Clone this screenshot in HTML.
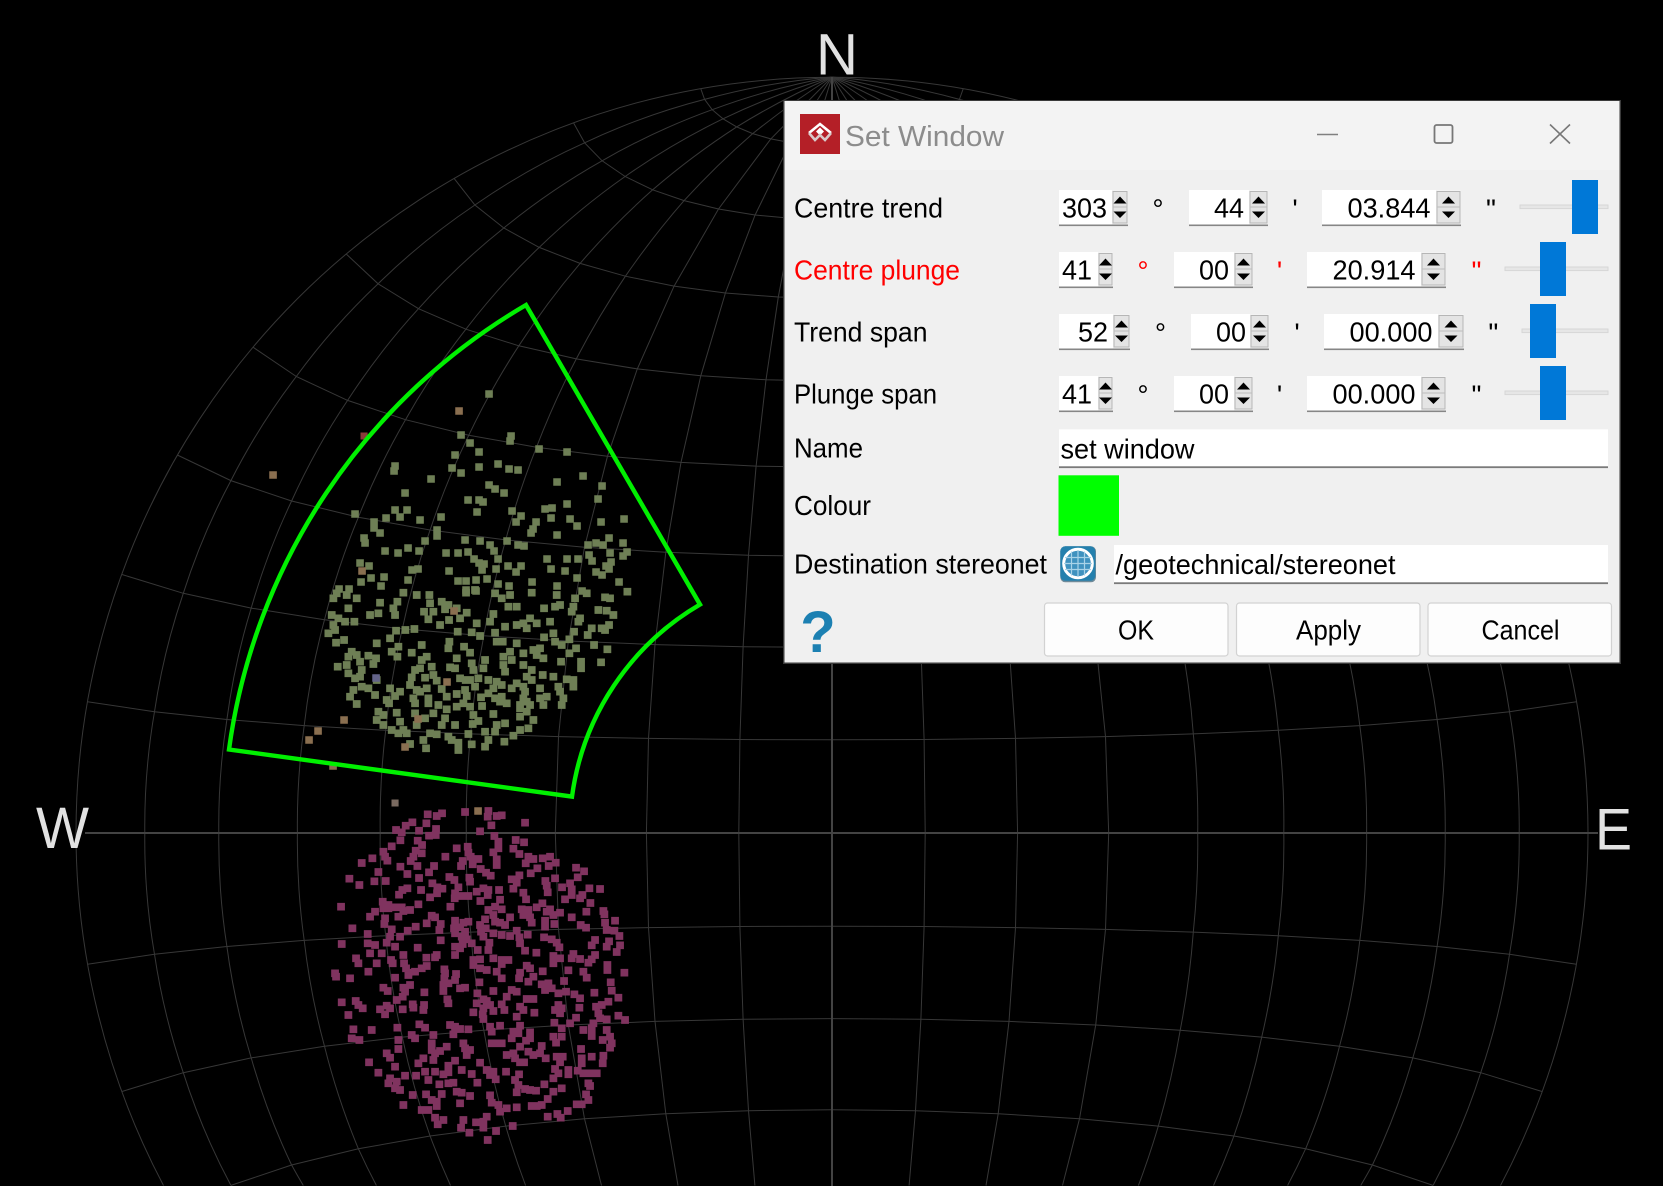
<!DOCTYPE html>
<html lang="en">
<head>
<meta charset="utf-8">
<title>Set Window</title>
<style>
html,body{margin:0;padding:0;background:#000;width:1663px;height:1186px;overflow:hidden}
svg{display:block;position:absolute;left:0;top:0}
text{font-family:"Liberation Sans",Arial,sans-serif;font-size:28px;fill:#000}
.r{fill:#ff0000}
.nsew{font-size:58px;fill:#e2e2e2}
.title{fill:#8c8c8c;font-size:29px}
.pt{fill:none;stroke-linecap:square}
</style>
</head>
<body>
<svg xmlns="http://www.w3.org/2000/svg" width="1663" height="1186" viewBox="0 0 1663 1186">
<defs>
<g id="q" fill="none" stroke="#373737" stroke-width="1">
<path d="M93.2 0L92.1 93.5 88.9 186.3 83.5 277.7 75.9 366.9 66 453.2 53.7 536 38.8 614.5 21.1 688 0 756"/>
<path d="M185.6 0L183.5 94.6 177 188.4 166.2 280.7 151 370.6 131.2 457.2 106.6 540 76.9 618 41.6 690.4 0 756"/>
<path d="M276.7 0L273.5 96.4 263.7 192 247.5 285.8 224.5 376.8 194.7 464.1 157.9 546.9 113.5 624 61.2 694.1 0 756"/>
<path d="M365.7 0A841 841 0 0 1 361.3 99.1 841 841 0 0 1 348.2 197.2 841 841 0 0 1 326.3 293.1 841 841 0 0 1 295.5 385.8 841 841 0 0 1 255.7 474.1 841 841 0 0 1 206.6 556.8 841 841 0 0 1 147.9 632.4 841 841 0 0 1 79.3 699.4 841 841 0 0 1 0 756"/>
<path d="M451.8 0A757 757 0 0 1 446.3 102.7 757 757 0 0 1 429.7 204.1 757 757 0 0 1 401.9 303 757 757 0 0 1 363.2 397.8 757 757 0 0 1 313.2 487.2 757 757 0 0 1 251.9 569.6 757 757 0 0 1 179.3 643.2 757 757 0 0 1 95.3 706.1 757 757 0 0 1 0 756"/>
<path d="M534.6 0A712 712 0 0 1 527.8 107.4 712 712 0 0 1 507.5 213.3 712 712 0 0 1 473.6 315.8 712 712 0 0 1 426.5 413.3 712 712 0 0 1 366.1 503.8 712 712 0 0 1 292.8 585.6 712 712 0 0 1 206.9 656.5 712 712 0 0 1 109 714.2 712 712 0 0 1 0 756"/>
<path d="M613.2 0A687 687 0 0 1 605.1 113.5 687 687 0 0 1 580.8 224.9 687 687 0 0 1 540.4 332 687 687 0 0 1 484.4 432.6 687 687 0 0 1 413.5 524.3 687 687 0 0 1 328.2 605 687 687 0 0 1 229.9 672.2 687 687 0 0 1 119.8 723.3 687 687 0 0 1 0 756"/>
<path d="M687.2 0A672 672 0 0 1 677.5 121.3 672 672 0 0 1 648.7 239.7 672 672 0 0 1 601.1 352.4 672 672 0 0 1 535.7 456.5 672 672 0 0 1 453.9 549.2 672 672 0 0 1 357.1 628 672 672 0 0 1 247.4 690.2 672 672 0 0 1 127.4 733.6 672 672 0 0 1 0 756"/>
<path d="M0 93.2L92.1 93.5 183.5 94.6 273.5 96.4 361.3 99.1 446.3 102.7 527.8 107.4 605.1 113.5 677.5 121.3 744.5 131.3"/>
<path d="M0 185.6L88.9 186.3 177 188.4 263.7 192 348.2 197.2 429.7 204.1 507.5 213.3 580.8 224.9 648.7 239.7 710.4 258.6"/>
<path d="M0 276.7L83.5 277.7 166.2 280.7 247.5 285.8 326.3 293.1 401.9 303 473.6 315.8 540.4 332 601.1 352.4 654.7 378"/>
<path d="M0 365.7L75.9 366.9 151 370.6 224.5 376.8 295.5 385.8 363.2 397.8 426.5 413.3 484.4 432.6 535.7 456.5 579.1 485.9"/>
<path d="M0 451.8L66 453.2 131.2 457.2 194.7 464.1 255.7 474.1 313.2 487.2 366.1 503.8 413.5 524.3 453.9 549.2 485.9 579.1"/>
<path d="M0 534.6L53.7 536 106.6 540 157.9 546.9 206.6 556.8 251.9 569.6 292.8 585.6 328.2 605 357.1 628 378 654.7"/>
<path d="M0 613.2L38.8 614.5 76.9 618 113.5 624 147.9 632.4 179.3 643.2 206.9 656.5 229.9 672.2 247.4 690.2 258.6 710.4"/>
<path d="M0 687.2L21.1 688 41.6 690.4 61.2 694.1 79.3 699.4 95.3 706.1 109 714.2 119.8 723.3 127.4 733.6 131.3 744.5"/>
</g>
<g id="qb" fill="none" stroke="#373737" stroke-width="1">
<path d="M93.2 0L92.1 93.5 88.9 186.3 83.5 277.7 77.1 352.5"/>
<path d="M185.6 0L183.5 94.6 177 188.4 166.2 280.7 154 352.5"/>
<path d="M276.7 0L273.5 96.4 263.7 192 247.5 285.8 230.5 352.5"/>
<path d="M365.7 0A841 841 0 0 1 361.3 99.1 841 841 0 0 1 348.2 197.2 841 841 0 0 1 326.3 293.1 841 841 0 0 1 306.4 352.5"/>
<path d="M451.8 0A757 757 0 0 1 446.3 102.7 757 757 0 0 1 429.7 204.1 757 757 0 0 1 401.9 303 757 757 0 0 1 381.5 352.5"/>
<path d="M534.6 0A712 712 0 0 1 527.8 107.4 712 712 0 0 1 507.5 213.3 712 712 0 0 1 473.6 315.8 712 712 0 0 1 455.6 352.5"/>
<path d="M613.2 0A687 687 0 0 1 605.1 113.5 687 687 0 0 1 580.8 224.9 687 687 0 0 1 540.4 332 687 687 0 0 1 528.7 352.5"/>
<path d="M687.2 0A672 672 0 0 1 677.5 121.3 672 672 0 0 1 648.7 239.7 672 672 0 0 1 601.1 352.4"/>
<path d="M0 93.2L92.1 93.5 183.5 94.6 273.5 96.4 361.3 99.1 446.3 102.7 527.8 107.4 605.1 113.5 677.5 121.3 744.5 131.3"/>
<path d="M0 185.6L88.9 186.3 177 188.4 263.7 192 348.2 197.2 429.7 204.1 507.5 213.3 580.8 224.9 648.7 239.7 710.4 258.6"/>
<path d="M0 276.7L83.5 277.7 166.2 280.7 247.5 285.8 326.3 293.1 401.9 303 473.6 315.8 540.4 332 601.1 352.4"/>
</g>
<g id="ar"><path d="M-6.5 13.5L0 6.5L6.5 13.5ZM-6.5 21.5L0 28L6.5 21.5Z" fill="#000"/></g>
<g id="row24">
<rect x="1059" width="54" height="35" fill="#f3f3f3"/><rect x="1059" width="39" height="34.5" fill="#fff"/><rect x="1059" y="34.5" width="54" height="1.6" fill="#868686"/>
<rect x="1099" y="1.5" width="13" height="31.5" fill="#e4e4e4" stroke="#b6b6b6"/><path d="M1099 17h13" stroke="#bdbdbd"/><use href="#ar" x="1105.5"/>
<rect x="1174" width="79" height="35" fill="#f3f3f3"/><rect x="1174" width="60" height="34.5" fill="#fff"/><rect x="1174" y="34.5" width="79" height="1.6" fill="#868686"/>
<rect x="1235" y="1.5" width="17" height="31.5" fill="#e4e4e4" stroke="#b6b6b6"/><path d="M1235 17h17" stroke="#bdbdbd"/><use href="#ar" x="1243.5"/>
<rect x="1307" width="139" height="35" fill="#f3f3f3"/><rect x="1307" width="114" height="34.5" fill="#fff"/><rect x="1307" y="34.5" width="139" height="1.6" fill="#868686"/>
<rect x="1422" y="1.5" width="23" height="31.5" fill="#e4e4e4" stroke="#b6b6b6"/><path d="M1422 17h23" stroke="#bdbdbd"/><use href="#ar" x="1433.5"/>
</g>
</defs>

<rect width="1663" height="1186" fill="#000"/>
<use href="#q" transform="translate(832 833) scale(1 -1)"/>
<use href="#q" transform="translate(832 833) scale(-1 -1)"/>
<use href="#qb" transform="translate(832 833)"/>
<use href="#qb" transform="translate(832 833) scale(-1 1)"/>
<path d="M76 833A756 756 0 0 1 1588 833A756 756 0 0 1 1500.5 1185.5M76 833A756 756 0 0 0 163.5 1185.5" fill="none" stroke="#373737" stroke-width="1"/>
<path d="M85 833H1598M832 77V1186" fill="none" stroke="#434343" stroke-width="2"/>

<path class="pt" transform="translate(320 800) scale(.33333)" stroke="#80335f" stroke-width="23" d="M323 43h.3M350 48h.3M366 40h.3M435 36h.3M505 33h.3M503 50h.3M530 48h.3M545 46h.3M615 68h.3M277 67h.3M257 77h.3M319 70h.3M228 90h.3M245 97h.3M297 92h.3M348 87h.3M347 105h.3M327 107h.3M514 76h.3M480 94h.3M241 121h.3M293 122h.3M306 135h.3M215 139h.3M523 108h.3M535 125h.3M535 145h.3M587 120h.3M612 127h.3M580 146h.3M598 162h.3M443 140h.3M410 145h.3M445 158h.3M452 170h.3M520 157h.3M530 178h.3M530 195h.3M190 155h.3M195 170h.3M202 182h.3M157 175h.3M125 189h.3M287 152h.3M305 160h.3M280 170h.3M272 183h.3M292 198h.3M376 170h.3M475 177h.3M428 183h.3M423 198h.3M458 193h.3M625 170h.3M640 177h.3M617 190h.3M668 175h.3M690 170h.3M707 188h.3M686 198h.3M241 200h.3M342 198h.3M327 217h.3M262 222h.3M175 216h.3M482 207h.3M498 218h.3M512 227h.3M652 205h.3M632 220h.3M598 226h.3M768 203h.3M792 214h.3M773 232h.3M88 236h.3M118 255h.3M163 244h.3M197 243h.3M297 234h.3M388 231h.3M403 240h.3M448 233h.3M450 245h.3M575 238h.3M590 248h.3M676 243h.3M680 257h.3M705 235h.3M750 250h.3M755 268h.3M337 250h.3M352 262h.3M367 266h.3M262 265h.3M247 270h.3M237 284h.3M303 270h.3M415 262h.3M405 280h.3M425 288h.3M445 288h.3M404 295h.3M470 275h.3M490 265h.3M505 270h.3M503 285h.3M537 270h.3M580 266h.3M610 278h.3M618 298h.3M726 262h.3M808 265h.3M840 267h.3M683 277h.3M755 285h.3M735 298h.3M787 285h.3M780 295h.3M351 280h.3M330 292h.3M481 303h.3M540 299h.3M188 305h.3M205 315h.3M63 320h.3M295 313h.3M391 320h.3M811 309h.3M667 310h.3M650 322h.3M205 325h.3M225 322h.3M245 322h.3M250 333h.3M270 330h.3M165 335h.3M150 350h.3M190 325h.3M235 350h.3M525 320h.3M505 330h.3M545 328h.3M520 345h.3M525 365h.3M605 328h.3M625 330h.3M610 345h.3M630 352h.3M690 328h.3M680 335h.3M720 338h.3M700 345h.3M850 333h.3M853 343h.3M799 335h.3M335 347h.3M345 352h.3M320 370h.3M195 355h.3M193 372h.3M570 352h.3M405 362h.3M445 365h.3M430 368h.3M495 358h.3M540 368h.3M555 375h.3M635 368h.3M755 352h.3M675 362h.3M703 372h.3M675 380h.3M97 385h.3M362 372h.3M358 390h.3M287 380h.3M263 392h.3M215 388h.3M402 385h.3M420 382h.3M435 395h.3M480 375h.3M497 385h.3M483 395h.3M590 392h.3M782 375h.3M798 383h.3M855 368h.3M885 362h.3M860 390h.3M883 392h.3M143 402h.3M210 410h.3M240 410h.3M405 400h.3M425 410h.3M440 418h.3M490 410h.3M520 400h.3M545 405h.3M570 408h.3M598 412h.3M623 404h.3M672 412h.3M695 418h.3M898 408h.3M825 420h.3M65 432h.3M143 430h.3M165 435h.3M200 428h.3M225 440h.3M362 421h.3M428 432h.3M455 430h.3M508 428h.3M600 430h.3M710 428h.3M718 442h.3M815 436h.3M867 424h.3M860 440h.3M900 436h.3M293 443h.3M405 440h.3M420 445h.3M473 450h.3M505 450h.3M615 452h.3M649 458h.3M890 456h.3M150 460h.3M185 460h.3M250 465h.3M405 465h.3M350 465h.3M319 473h.3M345 472h.3M700 468h.3M720 475h.3M760 462h.3M755 475h.3M780 477h.3M825 465h.3M815 478h.3M108 475h.3M213 480h.3M115 490h.3M170 490h.3M218 490h.3M252 490h.3M460 480h.3M480 478h.3M520 475h.3M545 480h.3M565 480h.3M460 495h.3M545 492h.3M805 488h.3M700 490h.3M258 505h.3M320 498h.3M305 505h.3M373 508h.3M480 505h.3M500 510h.3M530 515h.3M620 497h.3M630 505h.3M600 518h.3M668 514h.3M745 511h.3M862 495h.3M862 510h.3M790 515h.3M145 515h.3M265 518h.3M285 515h.3M45 520h.3M408 522h.3M913 518h.3M375 520h.3"/>

<path class="pt" transform="translate(320 975) scale(.33333)" stroke="#80335f" stroke-width="23" d="M48 5h.3M90 10h.3M225 8h.3M265 0h.3M373 10h.3M405 15h.3M370 30h.3M385 25h.3M545 10h.3M597 10h.3M640 5h.3M625 20h.3M800 8h.3M872 22h.3M732 18h.3M478 22h.3M190 38h.3M203 48h.3M250 38h.3M270 30h.3M255 50h.3M313 52h.3M420 40h.3M435 38h.3M370 48h.3M665 28h.3M685 25h.3M675 45h.3M695 40h.3M715 55h.3M738 50h.3M875 47h.3M823 53h.3M520 48h.3M575 45h.3M590 50h.3M472 55h.3M65 82h.3M107 78h.3M115 90h.3M128 100h.3M248 65h.3M230 75h.3M278 88h.3M280 98h.3M312 90h.3M310 105h.3M382 73h.3M385 85h.3M490 73h.3M470 85h.3M500 78h.3M560 65h.3M620 72h.3M640 72h.3M763 58h.3M780 70h.3M895 68h.3M865 80h.3M845 90h.3M828 95h.3M85 120h.3M180 103h.3M200 92h.3M210 100h.3M195 118h.3M248 103h.3M460 112h.3M520 108h.3M490 100h.3M510 90h.3M545 88h.3M553 105h.3M600 95h.3M610 105h.3M643 113h.3M590 125h.3M715 90h.3M725 100h.3M705 105h.3M720 115h.3M778 98h.3M835 115h.3M768 128h.3M488 118h.3M490 132h.3M750 145h.3M840 130h.3M860 133h.3M895 122h.3M915 135h.3M703 143h.3M232 158h.3M298 148h.3M315 158h.3M390 150h.3M405 155h.3M420 162h.3M445 163h.3M510 155h.3M540 152h.3M600 152h.3M820 145h.3M725 160h.3M790 165h.3M815 160h.3M860 165h.3M100 163h.3M155 165h.3M275 180h.3M340 180h.3M400 178h.3M285 190h.3M515 170h.3M580 170h.3M595 175h.3M630 172h.3M630 190h.3M700 185h.3M725 185h.3M815 183h.3M870 185h.3M95 190h.3M118 195h.3M235 195h.3M575 190h.3M618 197h.3M848 195h.3M708 203h.3M335 205h.3M430 205h.3M515 205h.3M535 205h.3M545 205h.3M875 205h.3M235 222h.3M335 225h.3M380 215h.3M360 228h.3M435 220h.3M450 225h.3M600 215h.3M665 213h.3M783 222h.3M870 218h.3M200 235h.3M210 248h.3M345 235h.3M440 240h.3M560 240h.3M580 235h.3M585 250h.3M625 230h.3M640 240h.3M660 235h.3M677 250h.3M710 245h.3M728 245h.3M785 250h.3M815 245h.3M850 242h.3M147 262h.3M310 250h.3M295 265h.3M340 255h.3M405 257h.3M385 272h.3M480 263h.3M600 262h.3M612 262h.3M720 262h.3M848 265h.3M785 265h.3M225 275h.3M175 293h.3M255 302h.3M288 302h.3M315 290h.3M345 290h.3M385 292h.3M370 298h.3M425 285h.3M455 297h.3M500 285h.3M520 290h.3M510 300h.3M558 290h.3M597 298h.3M705 282h.3M745 285h.3M773 287h.3M790 295h.3M810 295h.3M830 295h.3M715 295h.3M745 298h.3M210 310h.3M205 325h.3M230 320h.3M325 315h.3M527 313h.3M585 315h.3M700 310h.3M225 340h.3M240 345h.3M358 328h.3M385 325h.3M400 323h.3M472 323h.3M595 330h.3M805 325h.3M810 333h.3M673 328h.3M410 350h.3M425 353h.3M590 352h.3M615 342h.3M630 345h.3M648 347h.3M700 350h.3M725 340h.3M278 360h.3M318 358h.3M365 357h.3M450 363h.3M510 361h.3M798 358h.3M335 375h.3M350 380h.3M420 385h.3M515 383h.3M535 390h.3M683 372h.3M805 375h.3M250 390h.3M350 393h.3M560 400h.3M590 397h.3M635 393h.3M650 393h.3M665 390h.3M770 388h.3M785 388h.3M305 405h.3M325 405h.3M540 410h.3M345 428h.3M370 435h.3M353 448h.3M430 435h.3M500 425h.3M490 440h.3M468 442h.3M490 458h.3M683 425h.3M712 417h.3M722 428h.3M743 408h.3M578 453h.3M423 458h.3M528 468h.3M448 473h.3M503 495h.3"/>

<path class="pt" stroke="#6e7f55" stroke-width="7.5" d="M489 394h.1M461 435h.1M470 443h.1M511 436h.1M510 441h.1M539 449h.1M567 452h.1M455 455h.1M479 452h.1M395 466h.1M394 471h.1M452 468h.1M461 473h.1M479 467h.1M498 464h.1M509 469h.1M518 470h.1M583 476h.1M431 479h.1M557 482h.1M489 485h.1M495 489h.1M504 493h.1M602 486h.1M405 493h.1M468 500h.1M479 500h.1M483 502h.1M598 499h.1M567 504h.1M477 512h.1M512 511h.1M545 509h.1M552 508h.1M355 514h.1M395 510h.1M407 510h.1M400 517h.1M420 520h.1M441 517h.1M386 518h.1M521 516h.1M551 518h.1M570 519h.1M601 522h.1M624 519h.1M374 522h.1M516 522h.1M536 522h.1M577 526h.1M374 528h.1M380 533h.1M437 530h.1M437 536h.1M533 529h.1M531 533h.1M557 535h.1M364 538h.1M365 543h.1M425 541h.1M465 540h.1M480 541h.1M490 545h.1M507 541h.1M518 545h.1M524 546h.1M609 538h.1M623 543h.1M588 545h.1M596 543h.1M603 545h.1M385 551h.1M398 553h.1M408 548h.1M419 551h.1M446 553h.1M458 553h.1M468 552h.1M494 551h.1M474 559h.1M498 559h.1M547 559h.1M567 559h.1M578 559h.1M589 555h.1M610 553h.1M627 552h.1M623 556h.1M592 561h.1M611 562h.1M479 563h.1M484 564h.1M360 563h.1M369 566h.1M418 569h.1M412 570h.1M449 571h.1M482 570h.1M496 569h.1M508 566h.1M521 566h.1M516 572h.1M551 569h.1M565 571h.1M606 566h.1M596 572h.1M602 575h.1M609 569h.1M371 578h.1M384 577h.1M408 580h.1M458 581h.1M466 581h.1M476 580h.1M487 579h.1M577 578h.1M532 582h.1M557 586h.1M509 586h.1M498 584h.1M619 582h.1M361 582h.1M381 586h.1M339 589h.1M349 589h.1M466 590h.1M476 591h.1M582 591h.1"/>

<path class="pt" transform="translate(320 590) scale(.33333)" stroke="#6e7f55" stroke-width="23" d="M50 10h.3M40 25h.3M80 15h.3M110 25h.3M180 38h.3M85 55h.3M150 75h.3M175 70h.3M232 35h.3M220 55h.3M225 75h.3M250 8h.3M290 15h.3M328 15h.3M330 40h.3M312 65h.3M340 65h.3M325 88h.3M365 35h.3M385 45h.3M410 55h.3M375 58h.3M440 68h.3M438 8h.3M465 0h.3M387 90h.3M420 85h.3M360 105h.3M470 100h.3M510 95h.3M520 72h.3M525 10h.3M545 25h.3M570 15h.3M565 50h.3M590 50h.3M635 8h.3M672 55h.3M710 15h.3M705 50h.3M720 45h.3M765 25h.3M760 50h.3M755 65h.3M780 85h.3M775 95h.3M800 10h.3M855 22h.3M870 25h.3M835 60h.3M860 62h.3M880 75h.3M922 5h.3
M35 75h.3M55 85h.3M75 95h.3M103 95h.3M40 105h.3M25 130h.3M45 120h.3M48 158h.3M72 150h.3M228 122h.3M256 120h.3M283 117h.3M210 145h.3M235 170h.3M215 185h.3M232 200h.3M170 160h.3M275 188h.3M305 165h.3M388 155h.3M385 175h.3M432 170h.3M450 188h.3M413 125h.3M455 127h.3M480 138h.3M525 128h.3M555 110h.3M590 105h.3M610 100h.3M630 85h.3M650 100h.3M620 115h.3M690 95h.3M700 130h.3M672 142h.3M762 125h.3M815 115h.3M803 135h.3M845 115h.3M867 105h.3M855 120h.3M822 165h.3M862 178h.3M748 148h.3M705 155h.3M725 165h.3M768 175h.3M748 190h.3M548 155h.3M530 155h.3M590 160h.3M570 185h.3M550 200h.3M610 190h.3M640 180h.3M660 175h.3M670 205h.3M650 195h.3M723 215h.3M783 215h.3M783 235h.3M843 217h.3
M145 197h.3M168 205h.3M160 222h.3M53 230h.3M95 185h.3M85 200h.3M80 225h.3M85 250h.3M105 265h.3M120 260h.3M125 240h.3M120 215h.3M110 195h.3M170 270h.3M320 200h.3M305 210h.3M300 235h.3M285 240h.3M335 230h.3M275 262h.3M315 263h.3M340 255h.3M350 272h.3M410 205h.3M390 232h.3M405 235h.3M455 220h.3M460 240h.3M495 210h.3M490 235h.3M550 225h.3M555 245h.3M575 210h.3M610 225h.3M635 240h.3M620 260h.3M635 270h.3M668 255h.3M700 260h.3M740 268h.3M760 270h.3M715 290h.3M760 290h.3M660 295h.3
M125 290h.3M100 300h.3M145 295h.3M90 320h.3M165 315h.3M110 342h.3M210 295h.3M240 305h.3M225 318h.3M200 330h.3M207 340h.3M270 285h.3M290 300h.3M320 295h.3M300 305h.3M280 325h.3M285 340h.3M325 325h.3M325 340h.3M355 345h.3M365 297h.3M380 320h.3M410 312h.3M435 300h.3M440 318h.3M437 270h.3M420 265h.3M450 270h.3M475 265h.3M505 270h.3M530 275h.3M545 285h.3M575 295h.3M590 280h.3M610 290h.3M615 305h.3M465 290h.3M520 295h.3M505 310h.3M525 325h.3M545 320h.3M560 340h.3M540 335h.3M483 322h.3M486 348h.3M610 325h.3M600 345h.3M620 335h.3M630 345h.3M660 325h.3M680 320h.3M670 345h.3M720 305h.3M730 325h.3M725 345h.3M410 350h.3M430 340h.3M450 350h.3
M175 365h.3M190 375h.3M170 390h.3M230 368h.3M190 405h.3M240 395h.3M215 420h.3M235 430h.3M250 420h.3M260 430h.3M285 370h.3M315 385h.3M340 370h.3M380 358h.3M375 385h.3M365 405h.3M405 405h.3M460 375h.3M475 393h.3M458 402h.3M520 372h.3M600 355h.3M620 365h.3M640 390h.3M600 380h.3M625 415h.3M555 400h.3M530 405h.3M525 425h.3M495 425h.3M600 420h.3M580 437h.3M290 405h.3M445 432h.3M330 430h.3M350 433h.3M310 450h.3M385 440h.3M395 450h.3M415 458h.3M505 450h.3M553 455h.3M455 463h.3M495 470h.3M415 480h.3M318 475h.3M270 462h.3"/>

<path class="pt" stroke="#8a6f50" stroke-width="7.5" d="M344 720h.1M318 731h.1M309 740h.1M405 747h.1M447 682h.1M418 719h.1M454 611h.1M362 571h.1M459 411h.1M273 475h.1M478 811h.1M333 766h.1"/>
<path class="pt" stroke="#8a3a3a" stroke-width="7" d="M364 436h.1"/>
<path class="pt" stroke="#7a6a60" stroke-width="7" d="M395 803h.1"/>
<path class="pt" stroke="#64648a" stroke-width="7.5" d="M376 678h.1"/>

<path d="M229 749.5A610 610 0 0 1 526 305L700 604.5A263 263 0 0 0 572 796.6Z" fill="none" stroke="#00f000" stroke-width="4.4" stroke-linejoin="miter"/>
<text class="nsew" x="816" y="74.5" textLength="42" lengthAdjust="spacingAndGlyphs">N</text>
<text class="nsew" x="36" y="848" textLength="53" lengthAdjust="spacingAndGlyphs">W</text>
<text class="nsew" x="1595" y="849.5" textLength="37" lengthAdjust="spacingAndGlyphs">E</text>

<!-- dialog -->
<g>
<rect x="783" y="100" width="838" height="564" fill="#3a3a3a"/>
<rect x="784.5" y="101" width="835" height="561.5" fill="#f0f0f0"/>
<rect x="784.5" y="101" width="835" height="69" fill="#f3f3f3"/>
<rect x="800" y="114" width="40" height="40" fill="#b41f27"/>
<path d="M809 133L820 124L831 133" fill="none" stroke="#fff" stroke-width="2.6"/>
<path d="M820 127.5L824 131.5L820 135.5L816 131.5Z" fill="#fff"/>
<path d="M809 133L815 140L820 135L825 140L831 133" fill="none" stroke="#d9c9c9" stroke-width="2.6"/>
<text class="title" x="845" y="146" textLength="159" lengthAdjust="spacingAndGlyphs">Set Window</text>
<path d="M1317 134.5H1338" stroke="#808080" stroke-width="1.6" fill="none"/>
<rect x="1434.5" y="125" width="18" height="18" rx="2" fill="none" stroke="#777" stroke-width="1.8"/>
<path d="M1550 124.5L1570 143.5M1570 124.5L1550 143.5" stroke="#777" stroke-width="1.6" fill="none"/>
</g>

<!-- spin boxes: row 1 -->
<g transform="translate(0 190)">
<rect x="1059" width="69" height="35" fill="#f3f3f3"/><rect x="1059" width="53" height="34.5" fill="#fff"/><rect x="1059" y="34.5" width="69" height="1.6" fill="#868686"/>
<rect x="1113" y="1.5" width="14" height="31.5" fill="#e4e4e4" stroke="#b6b6b6"/><path d="M1113 17h14" stroke="#bdbdbd"/><use href="#ar" x="1120"/>
<rect x="1189" width="79" height="35" fill="#f3f3f3"/><rect x="1189" width="60" height="34.5" fill="#fff"/><rect x="1189" y="34.5" width="79" height="1.6" fill="#868686"/>
<rect x="1250" y="1.5" width="17" height="31.5" fill="#e4e4e4" stroke="#b6b6b6"/><path d="M1250 17h17" stroke="#bdbdbd"/><use href="#ar" x="1258.5"/>
<rect x="1322" width="139" height="35" fill="#f3f3f3"/><rect x="1322" width="114" height="34.5" fill="#fff"/><rect x="1322" y="34.5" width="139" height="1.6" fill="#868686"/>
<rect x="1437" y="1.5" width="23" height="31.5" fill="#e4e4e4" stroke="#b6b6b6"/><path d="M1437 17h23" stroke="#bdbdbd"/><use href="#ar" x="1448.5"/>
</g>
<use href="#row24" transform="translate(0 252)"/>
<!-- row 3 -->
<g transform="translate(0 314)">
<rect x="1059" width="71" height="35" fill="#f3f3f3"/><rect x="1059" width="54" height="34.5" fill="#fff"/><rect x="1059" y="34.5" width="71" height="1.6" fill="#868686"/>
<rect x="1114" y="1.5" width="15" height="31.5" fill="#e4e4e4" stroke="#b6b6b6"/><path d="M1114 17h15" stroke="#bdbdbd"/><use href="#ar" x="1121.5"/>
<rect x="1191" width="78" height="35" fill="#f3f3f3"/><rect x="1191" width="59" height="34.5" fill="#fff"/><rect x="1191" y="34.5" width="78" height="1.6" fill="#868686"/>
<rect x="1251" y="1.5" width="17" height="31.5" fill="#e4e4e4" stroke="#b6b6b6"/><path d="M1251 17h17" stroke="#bdbdbd"/><use href="#ar" x="1259.5"/>
<rect x="1324" width="140" height="35" fill="#f3f3f3"/><rect x="1324" width="114" height="34.5" fill="#fff"/><rect x="1324" y="34.5" width="140" height="1.6" fill="#868686"/>
<rect x="1439" y="1.5" width="24" height="31.5" fill="#e4e4e4" stroke="#b6b6b6"/><path d="M1439 17h24" stroke="#bdbdbd"/><use href="#ar" x="1451"/>
</g>
<use href="#row24" transform="translate(0 376)"/>

<!-- sliders -->
<g fill="#e6e6e6" stroke="#d6d6d6">
<rect x="1520" y="205" width="88" height="3.6"/>
<rect x="1505" y="267" width="103" height="3.6"/>
<rect x="1522" y="329" width="86" height="3.6"/>
<rect x="1505" y="391" width="103" height="3.6"/>
</g>
<g fill="#0078d7">
<rect x="1572" y="180" width="26" height="54"/>
<rect x="1540" y="242" width="26" height="54"/>
<rect x="1530" y="304" width="26" height="54"/>
<rect x="1540" y="366" width="26" height="54"/>
</g>

<g>
<text x="794" y="217.7" textLength="149" lengthAdjust="spacingAndGlyphs">Centre trend</text>
<text class="r" x="794" y="279.7" textLength="166" lengthAdjust="spacingAndGlyphs">Centre plunge</text>
<text x="794" y="341.7" textLength="133.5" lengthAdjust="spacingAndGlyphs">Trend span</text>
<text x="794" y="403.7" textLength="143" lengthAdjust="spacingAndGlyphs">Plunge span</text>
<text x="794" y="457.3" textLength="69" lengthAdjust="spacingAndGlyphs">Name</text>
<text x="794" y="515" textLength="77" lengthAdjust="spacingAndGlyphs">Colour</text>
<text x="794" y="573.3" textLength="253" lengthAdjust="spacingAndGlyphs">Destination stereonet</text>

<text x="1062" y="217.7" textLength="45" lengthAdjust="spacingAndGlyphs">303</text>
<text x="1214" y="217.7" textLength="30" lengthAdjust="spacingAndGlyphs">44</text>
<text x="1347.5" y="217.7" textLength="83" lengthAdjust="spacingAndGlyphs">03.844</text>
<text x="1158" y="218.5" text-anchor="middle">°</text>
<text x="1295" y="218.5" text-anchor="middle">'</text>
<text x="1491" y="218.5" text-anchor="middle">"</text>

<text x="1062" y="279.7" textLength="30" lengthAdjust="spacingAndGlyphs">41</text>
<text x="1199" y="279.7" textLength="30" lengthAdjust="spacingAndGlyphs">00</text>
<text x="1332.5" y="279.7" textLength="83" lengthAdjust="spacingAndGlyphs">20.914</text>
<text class="r" x="1143" y="280.5" text-anchor="middle">°</text>
<text class="r" x="1279.5" y="280.5" text-anchor="middle">'</text>
<text class="r" x="1476.5" y="280.5" text-anchor="middle">"</text>

<text x="1078" y="341.7" textLength="30" lengthAdjust="spacingAndGlyphs">52</text>
<text x="1216" y="341.7" textLength="30" lengthAdjust="spacingAndGlyphs">00</text>
<text x="1349.5" y="341.7" textLength="83" lengthAdjust="spacingAndGlyphs">00.000</text>
<text x="1160.5" y="342.5" text-anchor="middle">°</text>
<text x="1297" y="342.5" text-anchor="middle">'</text>
<text x="1493.3" y="342.5" text-anchor="middle">"</text>

<text x="1062" y="403.7" textLength="30" lengthAdjust="spacingAndGlyphs">41</text>
<text x="1199" y="403.7" textLength="30" lengthAdjust="spacingAndGlyphs">00</text>
<text x="1332.5" y="403.7" textLength="83" lengthAdjust="spacingAndGlyphs">00.000</text>
<text x="1143" y="404.5" text-anchor="middle">°</text>
<text x="1279.5" y="404.5" text-anchor="middle">'</text>
<text x="1476.5" y="404.5" text-anchor="middle">"</text>

<rect x="1059" y="429.3" width="549" height="37" fill="#fff"/>
<rect x="1059" y="466.3" width="549" height="1.8" fill="#7a7a7a"/>
<text x="1060.5" y="458.3" textLength="134" lengthAdjust="spacingAndGlyphs">set window</text>

<rect x="1058.5" y="475.3" width="60.5" height="60.5" fill="#00ff00"/>

<rect x="1060.3" y="546.3" width="35.7" height="36" rx="5" fill="#6f8a99"/>
<rect x="1060.3" y="546.3" width="35" height="34.5" rx="5" fill="#2480ad"/>
<circle cx="1078" cy="563.5" r="14.3" fill="#3f92bf" stroke="#fff" stroke-width="3"/>
<path d="M1065 557.5H1091M1064 563.5H1092M1065 569.5H1091M1078 550V577M1071.5 551.5V575.5M1084.5 551.5V575.5" fill="none" stroke="#a8d3e8" stroke-width="1.2"/>
<rect x="1114" y="545" width="494" height="37.3" fill="#fff"/>
<rect x="1114" y="582.3" width="494" height="1.8" fill="#7a7a7a"/>
<text x="1115.5" y="574" textLength="280" lengthAdjust="spacingAndGlyphs">/geotechnical/stereonet</text>

<text x="818" y="652" text-anchor="middle" style="font-size:58px;font-weight:700;fill:#1c80b2">?</text>

<rect x="1044.5" y="603" width="183.5" height="53" rx="3" fill="#fdfdfd" stroke="#d2d2d2" stroke-width="1.2"/>
<rect x="1236.5" y="603" width="183.5" height="53" rx="3" fill="#fdfdfd" stroke="#d2d2d2" stroke-width="1.2"/>
<rect x="1428" y="603" width="183.5" height="53" rx="3" fill="#fdfdfd" stroke="#d2d2d2" stroke-width="1.2"/>
<text x="1118" y="639.3" textLength="36" lengthAdjust="spacingAndGlyphs">OK</text>
<text x="1296" y="639.3" textLength="65" lengthAdjust="spacingAndGlyphs">Apply</text>
<text x="1481.5" y="639.3" textLength="78" lengthAdjust="spacingAndGlyphs">Cancel</text>
</g>
</svg>
</body>
</html>
